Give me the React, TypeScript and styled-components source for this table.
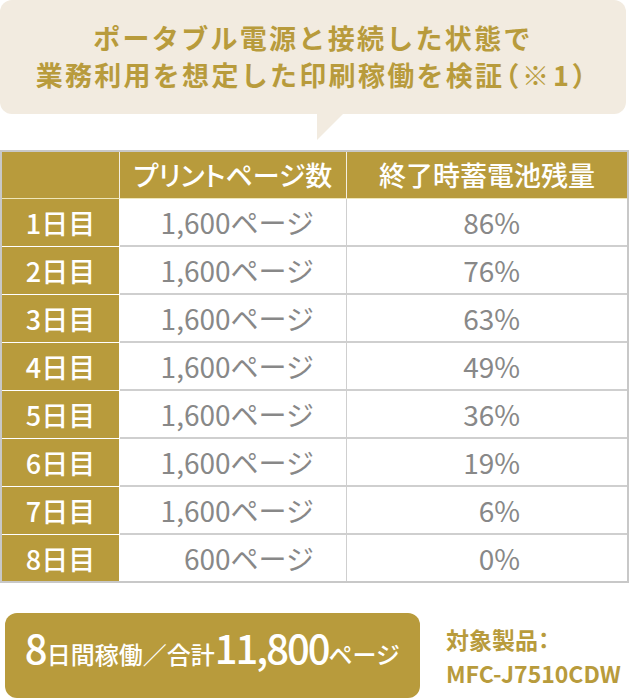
import React from "react";
import styled, { createGlobalStyle } from "styled-components";

const GOLD = "#b89b3c";
const GRAY_LINE = "#cfcfcf";

const Global = createGlobalStyle`
  html, body { margin: 0; padding: 0; background: #fff; }
  body { font-family: "Noto Sans CJK JP", "Noto Sans", sans-serif; }
`;

const Page = styled.div`
  width: 629px;
  display: flex;
  flex-direction: column;
`;

const Bubble = styled.div`
  position: relative;
  width: 626px;
  height: 114px;
  box-sizing: border-box;
  background: #f2ebe0;
  border-radius: 12px;
  display: flex;
  flex-direction: column;
  align-items: center;
  justify-content: center;
  color: ${GOLD};
  font-size: 27px;
  font-weight: 700;
  letter-spacing: 2.3px;
  line-height: 37px;
  padding-bottom: 2px;
  &::after {
    content: "";
    position: absolute;
    left: 317px;
    top: 114px;
    width: 0;
    height: 0;
    border-top: 26px solid #f2ebe0;
    border-right: 26px solid transparent;
  }
`;

const Note = styled.span`
  font-feature-settings: "palt";
  letter-spacing: 4px;
`;

const Table = styled.div`
  margin-top: 36px;
  width: 629px;
  box-sizing: border-box;
  border: 2px solid #c8c8c8;
  display: flex;
  flex-direction: column;
`;

const Row = styled.div<{ $head?: boolean; $last?: boolean }>`
  display: grid;
  grid-template-columns: 118px 227px 1fr;
  height: ${(p) => (p.$head ? 47 : p.$last ? 46 : 48)}px;
`;

const HeadCell = styled.div<{ $end?: boolean }>`
  background: ${GOLD};
  color: #fff;
  font-size: 27px;
  font-weight: 500;
  display: flex;
  align-items: center;
  justify-content: center;
  border-right: ${(p) => (p.$end ? "none" : "1px solid #f4efe2")};
  border-bottom: 1px solid #efe6b8;
  padding-bottom: 2px;
  box-sizing: border-box;
`;

const Kana = styled.span`
  font-feature-settings: "palt";
`;

const DayCell = styled.div<{ $last?: boolean }>`
  background: ${GOLD};
  color: #fff;
  font-size: 27px;
  font-weight: 500;
  display: flex;
  align-items: center;
  justify-content: center;
  border-right: 1px solid #fff;
  border-bottom: ${(p) => (p.$last ? "none" : "1px solid #fff")};
  box-sizing: border-box;
`;

const ValueCell = styled.div<{ $last?: boolean; $pr: number; $divider?: boolean }>`
  background: #fff;
  color: #888;
  font-size: 28px;
  font-weight: 400;
  display: flex;
  align-items: center;
  justify-content: flex-end;
  padding-right: ${(p) => p.$pr}px;
  border-right: ${(p) => (p.$divider ? `1px solid ${GRAY_LINE}` : "none")};
  border-bottom: ${(p) => (p.$last ? "none" : `2px solid ${GRAY_LINE}`)};
  box-sizing: border-box;
`;

const Footer = styled.div`
  margin-top: 30px;
  display: flex;
  align-items: center;
  padding-left: 5px;
`;

const Summary = styled.div`
  width: 415px;
  height: 85px;
  box-sizing: border-box;
  background: ${GOLD};
  border-radius: 12px;
  color: #fff;
  display: flex;
  align-items: baseline;
  justify-content: center;
  padding-top: 14px;
  font-size: 24px;
  font-weight: 500;
  white-space: nowrap;
`;

const Big = styled.span<{ $size: number; $track: number }>`
  font-size: ${(p) => p.$size}px;
  letter-spacing: ${(p) => p.$track}px;
  line-height: 1;
`;

const Product = styled.div`
  margin-left: 26px;
  color: ${GOLD};
  font-size: 23px;
  font-weight: 700;
  line-height: 34px;
`;

const Colon = styled.span`
  font-feature-settings: "palt";
`;

const rows = [
  ["1日目", "1,600ページ", "86%"],
  ["2日目", "1,600ページ", "76%"],
  ["3日目", "1,600ページ", "63%"],
  ["4日目", "1,600ページ", "49%"],
  ["5日目", "1,600ページ", "36%"],
  ["6日目", "1,600ページ", "19%"],
  ["7日目", "1,600ページ", "6%"],
  ["8日目", "600ページ", "0%"],
];

export default function App() {
  return (
    <Page>
      <Global />
      <Bubble>
        <div>ポータブル電源と接続した状態で</div>
        <div>
          業務利用を想定した印刷稼働を検証<Note>（※1）</Note>
        </div>
      </Bubble>
      <Table>
        <Row $head>
          <HeadCell />
          <HeadCell>
            <Kana>プリントページ</Kana>数
          </HeadCell>
          <HeadCell $end>終了時蓄電池残量</HeadCell>
        </Row>
        {rows.map((r, i) => {
          const last = i === rows.length - 1;
          return (
            <Row key={r[0]} $last={last}>
              <DayCell $last={last}>{r[0]}</DayCell>
              <ValueCell $last={last} $pr={32} $divider>
                {r[1]}
              </ValueCell>
              <ValueCell $last={last} $pr={107}>
                {r[2]}
              </ValueCell>
            </Row>
          );
        })}
      </Table>
      <Footer>
        <Summary>
          <Big $size={40} $track={-1}>8</Big>日間稼働／合計
          <Big $size={40} $track={-2}>11,800</Big>ページ
        </Summary>
        <Product>
          対象製品<Colon>：</Colon>
          <br />
          MFC-J7510CDW
        </Product>
      </Footer>
    </Page>
  );
}
